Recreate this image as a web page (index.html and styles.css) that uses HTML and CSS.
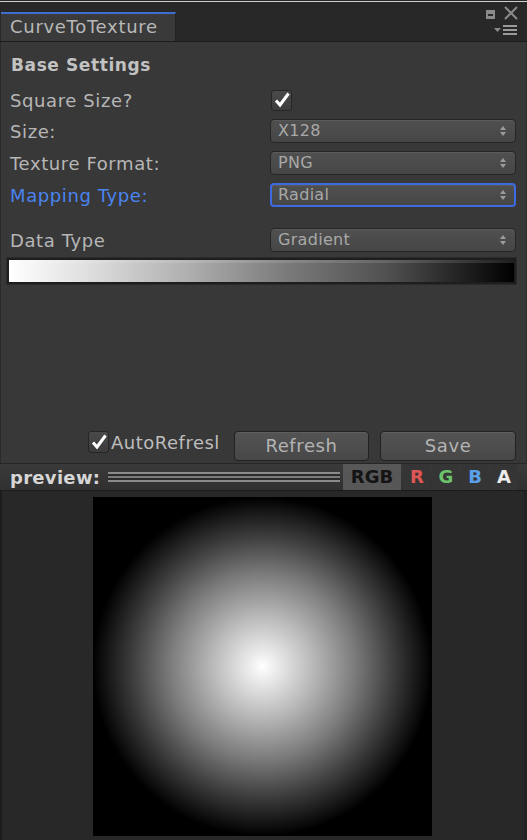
FILE: index.html
```html
<!DOCTYPE html>
<html>
<head>
<meta charset="utf-8">
<link rel="stylesheet" href="styles.css">
</head>
<body>
<div class="window">
  <div class="topline"></div>
  <div class="tabbar">
    <div class="tab">CurveToTexture</div>
    <div class="winctl">
      <div class="ctl-row">
        <span class="maxbtn"></span>
        <svg class="closebtn" width="14" height="14" viewBox="0 0 14 14"><path d="M1 1L13 13M13 1L1 13" stroke="#8a8a8a" stroke-width="2"/></svg>
      </div>
      <div class="ctl-row menu">
        <svg width="26" height="12" viewBox="0 0 26 12"><path d="M0 3h7l-3.5 4z" fill="#8a8a8a"/><path d="M9 1h14M9 5h14M9 9h14" stroke="#9a9a9a" stroke-width="2"/></svg>
      </div>
    </div>
  </div>
  <div class="panel">
    <div class="section">Base Settings</div>
    <div class="row r-check">
      <div class="label">Square Size?</div>
      <div class="field"><span class="checkbox"><svg width="18" height="18" viewBox="0 0 18 18"><path d="M3 9.5l4 4.5L15.5 2.5" fill="none" stroke="#fff" stroke-width="3"/></svg></span></div>
    </div>
    <div class="row">
      <div class="label">Size:</div>
      <div class="field"><div class="dropdown">X128<span class="arrows"></span></div></div>
    </div>
    <div class="row">
      <div class="label">Texture Format:</div>
      <div class="field"><div class="dropdown">PNG<span class="arrows"></span></div></div>
    </div>
    <div class="row">
      <div class="label blue">Mapping Type:</div>
      <div class="field"><div class="dropdown focused">Radial<span class="arrows"></span></div></div>
    </div>
    <div class="row r-data">
      <div class="label">Data Type</div>
      <div class="field"><div class="dropdown">Gradient<span class="arrows"></span></div></div>
    </div>
    <div class="gradbar"><div class="grad"></div></div>
    <div class="spacer"></div>
    <div class="actions">
      <div class="auto"><span class="checkbox small"><svg width="18" height="18" viewBox="0 0 18 18"><path d="M3 9.5l4 4.5L15.5 2.5" fill="none" stroke="#fff" stroke-width="3"/></svg></span><span class="autotext">AutoRefresl</span></div>
      <div class="btn refresh">Refresh</div>
      <div class="btn save">Save</div>
    </div>
  </div>
  <div class="previewbar">
    <div class="pvlabel">preview:</div>
    <div class="slider"></div>
    <div class="chan rgb">RGB</div>
    <div class="chan r">R</div>
    <div class="chan g">G</div>
    <div class="chan b">B</div>
    <div class="chan a">A</div>
  </div>
  <div class="preview">
    <div class="image"></div>
  </div>
</div>
</body>
</html>
```
FILE: styles.css
```css
* { box-sizing: border-box; }
html, body { margin: 0; padding: 0; background: #282828; }
body { width: 527px; height: 840px; overflow: hidden; font-family: "DejaVu Sans", sans-serif; }
.window { width: 527px; height: 840px; display: flex; flex-direction: column; background: #282828; }
.topline { height: 2px; border-bottom: 1px solid #d0d0d0; }
.tabbar { height: 40px; display: flex; justify-content: space-between; align-items: flex-end; border-bottom: 1px solid #1c1c1c; background: #282828; }
.tab { width: 175px; height: 29px; margin-left: 1px; background: #3a3a3a; border-top: 2px solid #3e6fd0; border-right: 1px solid #232323; color: #b8b8b8; font-size: 18px; letter-spacing: 0.7px; padding-left: 9px; line-height: 26px; }
.winctl { display: flex; flex-direction: column; align-items: flex-end; padding-right: 9px; height: 40px; }
.ctl-row { display: flex; align-items: center; gap: 9px; height: 22px; }
.ctl-row.menu { height: 16px; margin-right: -2px; }
.maxbtn { width: 9px; height: 9px; background: #8a8a8a; border-top: 2px solid #8a8a8a; position: relative; margin-top: 4px; }
.maxbtn::after { content: ""; position: absolute; left: 2px; top: 2px; width: 5px; height: 2px; background: #2a2a2a; }
.closebtn { margin-top: 2px; }
.panel { background: #383838; border-left: 1px solid #2a2a2a; border-right: 1px solid #2e2e2e; display: flex; flex-direction: column; height: 421px; padding: 0 10px 0 9px; }
.section { font-weight: bold; font-size: 17px; color: #c2c2c2; padding-left: 1px; height: 40px; line-height: 46px; letter-spacing: 0.6px; }
.row { display: flex; align-items: center; height: 32px; }
.row.r-check { height: 30px; margin-top: 3px; }
.row.r-data { margin-top: 13px; height: 32px; }
.label { width: 261px; font-size: 18px; letter-spacing: 0.6px; color: #b6b6b6; white-space: nowrap; }
.label.blue { color: #4a84f0; }
.field { flex: 1; display: flex; align-items: center; }
.checkbox { width: 21px; height: 21px; border-radius: 3px; background: linear-gradient(#4a4a4a, #3c3c3c); border: 1px solid #262626; display: flex; align-items: center; justify-content: center; }
.dropdown { width: 246px; height: 24px; border-radius: 4px; background: linear-gradient(#505050, #464646); border: 1px solid #252525; box-shadow: inset 0 1px 0 #5a5a5a; color: #a8a8a8; font-size: 16px; letter-spacing: 0.3px; line-height: 22px; padding-left: 7px; position: relative; }
.dropdown.focused { border: 2px solid #3c6ae0; line-height: 20px; padding-left: 6px; }
.arrows { position: absolute; right: 9px; top: 6px; width: 6px; height: 10px; }
.arrows::before, .arrows::after { content: ""; position: absolute; left: 0; border-left: 3px solid transparent; border-right: 3px solid transparent; }
.arrows::before { top: 0; border-bottom: 4px solid #9c9c9c; }
.arrows::after { top: 6px; border-top: 4px solid #9c9c9c; }
.focused .arrows { right: 8px; top: 5px; }
.gradbar { margin: 1px 0 0 -4px; width: 511px; height: 28px; background: #1e1e1e; padding: 2px; border: 1px solid #2b2b2b; }
.grad { width: 100%; height: 100%; background: linear-gradient(to right, #ffffff 0%, #e0e0e0 15%, #b0b0b0 35%, #7a7a7a 55%, #505050 75%, #202020 90%, #000 100%); border-top: 3px solid rgba(255,255,255,0.12); }
.spacer { flex: 1; }
.actions { display: flex; align-items: flex-start; height: 32px; }
.auto { display: flex; align-items: center; margin-left: 78px; width: 146px; height: 22px; }
.checkbox.small { width: 21px; height: 22px; }
.autotext { color: #bdbdbd; font-size: 18px; letter-spacing: 0.5px; margin-left: 2px; white-space: nowrap; overflow: hidden; width: 110px; }
.btn { width: 136px; height: 30px; border-radius: 4px; background: linear-gradient(#545454, #474747); border: 1px solid #222; box-shadow: inset 0 1px 0 #5e5e5e; color: #b4b4b4; font-size: 18px; letter-spacing: 0.6px; text-align: center; line-height: 28px; }
.save { margin-left: 11px; }
.previewbar { height: 28px; display: flex; align-items: center; background: linear-gradient(#3a3a3a, #303030); border-top: 1px solid #262626; border-bottom: 1px solid #1c1c1c; padding-left: 10px; }
.pvlabel { color: #d6d6d6; font-weight: bold; font-size: 18px; width: 98px; letter-spacing: 0.3px; }
.slider { width: 232px; height: 10px; border-top: 2px solid #8a8a8a; border-bottom: 2px solid #8a8a8a; background: #2a2a2a; margin-right: 3px; position: relative; }
.slider::after { content: ""; position: absolute; left: 0; right: 0; top: 2px; height: 2px; background: #7a7a7a; }
.chan { height: 26px; font-weight: bold; font-size: 18px; line-height: 26px; text-align: center; width: 28px; margin-right: 1px; background: #353535; }
.chan.rgb { width: 58px; background: #575757; color: #141414; margin-right: 2px; }
.chan.r { color: #e05555; }
.chan.g { color: #6cc36c; }
.chan.b { color: #5aa0e8; }
.chan.a { color: #ececec; }
.preview { flex: 1; background: #282828; border-left: 2px solid #1c1c1c; border-right: 3px solid #222; display: flex; justify-content: center; padding-top: 6px; padding-right: 2px; }
.image { width: 339px; height: 339px; background: radial-gradient(circle closest-side at 50% 50%, #ffffff 0%, #b8b8b8 30%, #7a7a7a 55%, #3a3a3a 78%, #000 100%); background-color: #000; }
```
